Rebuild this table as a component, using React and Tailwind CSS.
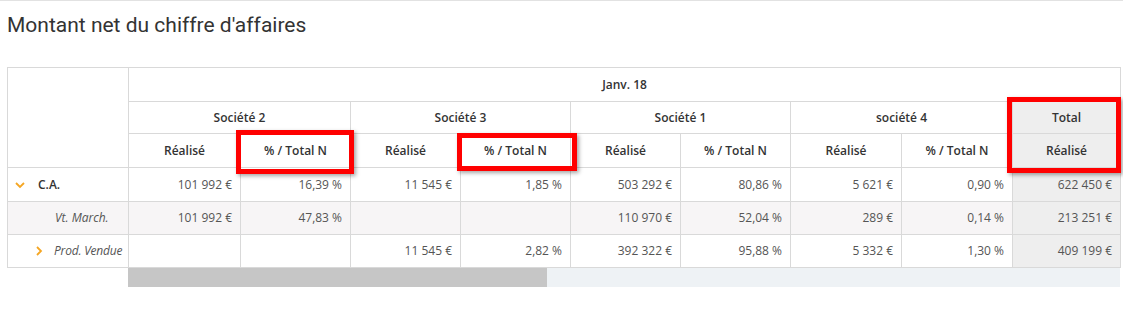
import React from 'react';

const companies = ['Société 2', 'Société 3', 'Société 1', 'société 4'];

const rows = [
  {
    label: 'C.A.',
    kind: 'open',
    values: ['101 992 €', '16,39 %', '11 545 €', '1,85 %', '503 292 €', '80,86 %', '5 621 €', '0,90 %'],
    total: '622 450 €',
  },
  {
    label: 'Vt. March.',
    kind: 'leaf',
    values: ['101 992 €', '47,83 %', '', '', '110 970 €', '52,04 %', '289 €', '0,14 %'],
    total: '213 251 €',
  },
  {
    label: 'Prod. Vendue',
    kind: 'closed',
    values: ['', '', '11 545 €', '2,82 %', '392 322 €', '95,88 %', '5 332 €', '1,30 %'],
    total: '409 199 €',
  },
];

const widths = [121, 112, 110, 110, 110, 110, 110, 111, 111, 108];

function Chevron({ open }) {
  return (
    <svg width="10" height="10" viewBox="0 0 10 10" className="shrink-0">
      {open ? (
        <path d="M1 3 L5 7 L9 3" fill="none" stroke="#f5a623" strokeWidth="1.8" />
      ) : (
        <path d="M3 1 L7 5 L3 9" fill="none" stroke="#f5a623" strokeWidth="1.8" />
      )}
    </svg>
  );
}

function RedBox({ className }) {
  return (
    <div
      className={`absolute border-[5px] border-[#ff0000] shadow-[2px_2px_4px_rgba(0,0,0,0.35)] pointer-events-none ${className}`}
    />
  );
}

export default function App() {
  const th = 'border border-[#d9d9d9] text-center font-semibold text-[12px] text-[#333]';
  const td = 'border border-[#d9d9d9] text-right pr-2 text-[12px] text-[#555]';

  return (
    <div className="relative w-[1123px] h-[335px] bg-white border-t border-[#e2e2e2] font-['Open_Sans',sans-serif]">
      <h1 className="pl-[7px] pt-[10px] text-[21px] text-[#333] font-['Roboto',sans-serif] leading-[28px]">
        Montant net du chiffre d'affaires
      </h1>

      <div className="ml-[7px] mt-[28px] w-[1114px]">
        <table className="table-fixed border-collapse w-[1114px]">
          <colgroup>
            {widths.map((w, i) => (
              <col key={i} style={{ width: w }} />
            ))}
          </colgroup>
          <thead>
            <tr className="h-[34px]">
              <th rowSpan={3} className="border border-[#d9d9d9]" />
              <th colSpan={9} className={th}>Janv. 18</th>
            </tr>
            <tr className="h-[32px]">
              {companies.map((c) => (
                <th key={c} colSpan={2} className={th}>{c}</th>
              ))}
              <th className={`${th} bg-[#eeeeee]`}>Total</th>
            </tr>
            <tr className="h-[34px]">
              {companies.map((c) => (
                <React.Fragment key={c}>
                  <th className={th}>Réalisé</th>
                  <th className={th}>% / Total N</th>
                </React.Fragment>
              ))}
              <th className={`${th} bg-[#eeeeee]`}>Réalisé</th>
            </tr>
          </thead>
          <tbody>
            {rows.map((r, i) => (
              <tr key={r.label} className={`${i === 0 ? 'h-[34px]' : 'h-[33px]'} ${i === 1 ? 'bg-[#f7f5f6]' : ''}`}>
                <td className="border border-[#d9d9d9] text-[12px] whitespace-nowrap overflow-hidden">
                  {r.kind === 'open' && (
                    <div className="flex items-center gap-[13px] pl-[7px]">
                      <Chevron open />
                      <span className="font-semibold text-[#333]">{r.label}</span>
                    </div>
                  )}
                  {r.kind === 'leaf' && (
                    <div className="pl-[47px] italic text-[#555]">{r.label}</div>
                  )}
                  {r.kind === 'closed' && (
                    <div className="flex items-center gap-[10px] pl-[26px] tracking-[-0.2px]">
                      <Chevron />
                      <span className="italic text-[#555]">{r.label}</span>
                    </div>
                  )}
                </td>
                {r.values.map((v, j) => (
                  <td key={j} className={td}>{v}</td>
                ))}
                <td className={`${td} bg-[#eeeeee]`}>{r.total}</td>
              </tr>
            ))}
          </tbody>
        </table>
        <div className="ml-[121px] flex h-[19px] w-[992px] bg-[#eef2f5]">
          <div className="w-[419px] h-full bg-[#c6c6c6]" />
        </div>
      </div>

      <RedBox className="left-[236px] top-[129px] w-[118px] h-[44px]" />
      <RedBox className="left-[457px] top-[132px] w-[120px] h-[38px]" />
      <RedBox className="left-[1007px] top-[96px] w-[114px] h-[76px]" />
    </div>
  );
}
